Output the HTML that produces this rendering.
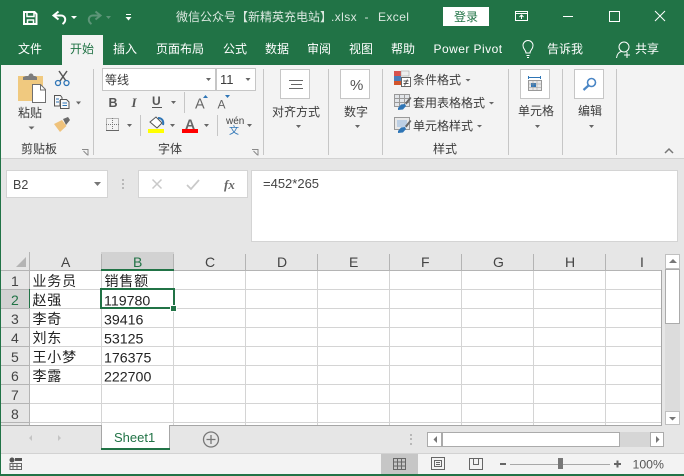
<!DOCTYPE html>
<html lang="zh">
<head>
<meta charset="utf-8">
<title>Excel</title>
<style>
html,body{margin:0;padding:0;background:#e6e6e6;width:684px;height:476px;overflow:hidden}
svg{display:block}
text{font-family:"Liberation Sans","Noto Sans CJK SC",sans-serif;font-size:12px;fill:#444}
.t{fill:#fff}
.r{fill:#3c3c3c}
.c{font-size:14.2px;fill:#222}
.z{font-size:14px;fill:#222;letter-spacing:.8px}
.h{font-size:14px;fill:#444}
.tri{fill:#666}
</style>
</head>
<body>
<svg xmlns="http://www.w3.org/2000/svg" width="684" height="476" viewBox="0 0 684 476">
<!-- backgrounds -->
<rect width="684" height="476" fill="#e6e6e6"/>
<rect width="684" height="65" fill="#217346"/>
<rect x="0" y="65" width="684" height="94" fill="#f3f3f3"/>
<rect x="0" y="158" width="684" height="1" fill="#d2d2d2"/>
<rect x="62" y="35" width="41" height="31" fill="#f3f3f3"/>

<!-- QAT -->
<g fill="none" stroke="#fff" stroke-width="2">
<path d="M24 12h10.500l2 2V24H24z"/>
</g>
<g fill="none" stroke="#fff" stroke-width="1.500">
<path d="M27 12v4.500h7V12M27.500 24v-4h6v4"/>
</g>
<path d="M58.500 11.500l-5 4 5 4" fill="none" stroke="#fff" stroke-width="2"/>
<path d="M54 15.500h7c4.500 0 6 5.500 1.500 8.500" fill="none" stroke="#fff" stroke-width="2"/>
<path d="M71 16h6l-3 3z" fill="#fff"/>
<path d="M95.500 11.500l5 4-5 4" fill="none" stroke="#5d9578" stroke-width="2"/>
<path d="M100 15.500h-7c-4.500 0-6 5.500-1.500 8.500" fill="none" stroke="#5d9578" stroke-width="2"/>
<path d="M106 16h5l-2.500 3z" fill="#5d9578"/>
<rect x="126" y="14" width="5" height="1" fill="#fff"/>
<path d="M125.500 17h6l-3 3.500z" fill="#fff"/>

<!-- title -->
<text x="176" y="21" style="fill:#dbe8e0">微信公众号【新精英充电站】</text>
<text x="331" y="21" style="fill:#dbe8e0;letter-spacing:.4px">.xlsx</text>
<text x="364.500" y="21" style="fill:#dbe8e0">-</text>
<text x="378" y="21" style="fill:#dbe8e0;letter-spacing:.4px">Excel</text>
<rect x="443" y="7" width="46" height="19" fill="#fff"/>
<text x="454" y="21" style="fill:#217346">登录</text>
<g fill="none" stroke="#fff" stroke-width="1">
<rect x="515.500" y="11.500" width="12" height="9"/>
<path d="M516 13.500h11M521.500 19v-4M519.500 17l2-2 2 2"/>
<path d="M563 16.500h10" />
<rect x="609.500" y="11.500" width="10" height="10"/>
<path d="M655 11l10 10M665 11l-10 10"/>
</g>

<!-- tabs -->
<text class="t" x="18" y="53">文件</text>
<text x="70" y="53" style="fill:#217346">开始</text>
<text class="t" x="113" y="53">插入</text>
<text class="t" x="156" y="53">页面布局</text>
<text class="t" x="223" y="53">公式</text>
<text class="t" x="265" y="53">数据</text>
<text class="t" x="307" y="53">审阅</text>
<text class="t" x="349" y="53">视图</text>
<text class="t" x="391" y="53">帮助</text>
<text class="t" x="433.500" y="53" style="letter-spacing:.45px">Power Pivot</text>
<g fill="none" stroke="#fff" stroke-width="1">
<path d="M526 53c0-3-3-3.500-3-7.500a5 5 0 0 1 10 0c0 4-3 4.500-3 7.500z"/>
<path d="M526.500 55.500h3M527 57.500h2"/>
<circle cx="624" cy="47" r="5"/>
<path d="M616.500 58c.5-4 2.500-6 5-6.500M627 52v6M624 55h6"/>
</g>
<text class="t" x="547" y="53">告诉我</text>
<text class="t" x="635" y="53">共享</text>

<!-- ribbon separators -->
<g fill="#c6c6c6">
<rect x="93" y="69" width="1" height="86"/>
<rect x="263" y="69" width="1" height="86"/>
<rect x="328" y="69" width="1" height="86"/>
<rect x="382" y="69" width="1" height="86"/>
<rect x="508" y="69" width="1" height="86"/>
<rect x="562" y="69" width="1" height="86"/>
<rect x="616" y="69" width="1" height="86"/>
<rect x="184" y="92" width="1" height="21"/>
<rect x="140" y="115" width="1" height="21"/>
<rect x="217" y="115" width="1" height="21"/>
</g>

<!-- clipboard -->
<rect x="18" y="76" width="25" height="25" fill="#f0c97f"/>
<path d="M23 80v-3l3-1h2.500a2.500 2.500 0 0 1 5 0H35l2 1v3z" fill="#7d7d7d"/>
<path d="M32.500 84.500h8l5 5v13h-13z" fill="#fff" stroke="#6f6f6f"/>
<path d="M40.500 85v5h5" fill="none" stroke="#6f6f6f"/>
<text class="r" x="18" y="117">粘贴</text>
<path d="M28.500 126.500h6l-3 3z" class="tri"/>
<path d="M59 71l7 10M67 71l-7 10" fill="none" stroke="#555" stroke-width="1.500"/>
<circle cx="58" cy="83" r="2.500" fill="none" stroke="#2e75b6" stroke-width="1.300"/>
<circle cx="66.500" cy="83" r="2.500" fill="none" stroke="#2e75b6" stroke-width="1.300"/>
<path d="M54.500 95.500h6l1.500 2v3h-2v5.500h-5.500z" fill="#f8f8f8" stroke="#555"/>
<path d="M60.500 99.500h6l2.500 2.500v6.500h-8.500z" fill="#f8f8f8" stroke="#555"/>
<path d="M56 99h3M56 102h3" stroke="#2e75b6"/>
<path d="M62.500 103h4.500M62.500 105.500h4.500" stroke="#2e75b6"/>
<path d="M76 101.500h5l-2.500 3z" class="tri"/>
<path d="M54 124l8-4 4.500 6-6.500 6z" fill="#efc27b"/>
<path d="M63 119l5-2 2 3-4 5z" fill="#6b6b6b"/>
<text class="r" x="21" y="153">剪贴板</text>
<path d="M82 149.500h6v6M83.500 151l4 4" fill="none" stroke="#8a8a8a"/>

<!-- font -->
<rect x="102.500" y="68.500" width="113" height="22" fill="#fff" stroke="#c6c6c6"/>
<rect x="216.500" y="68.500" width="39" height="22" fill="#fff" stroke="#c6c6c6"/>
<text x="105" y="84" class="r">等线</text>
<text x="220" y="84" class="r" style="font-size:13px">11</text>
<path d="M206 78h5l-2.500 3zM245.500 78h5l-2.500 3z" class="tri"/>
<text x="108.500" y="107" style="font-size:12.500px;font-weight:bold;fill:#555">B</text>
<text x="131.500" y="107" style="font-size:13px;font-style:italic;font-family:'Liberation Serif',serif;font-weight:bold;fill:#555">I</text>
<text x="152" y="105" style="font-size:12px;font-weight:bold;fill:#555">U</text>
<rect x="152" y="107" width="10" height="1" fill="#555"/>
<path d="M171 101h5l-2.500 3z" class="tri"/>
<text x="195" y="108.500" style="font-size:14.500px;fill:#666">A</text>
<path d="M203 98h5l-2.500-3z" fill="#2e75b6"/>
<text x="217.500" y="108.500" style="font-size:12px;fill:#666">A</text>
<path d="M225 95h5l-2.500 3z" fill="#2e75b6"/>
<g fill="none" stroke="#777" stroke-dasharray="1 1">
<rect x="106.500" y="118.500" width="12" height="12"/>
<path d="M112.500 118v13M106 124.500h13"/>
</g>
<path d="M106 130.500h13" stroke="#666"/>
<path d="M127 124h5l-2.500 3z" class="tri"/>
<path d="M150 122l6-5 6 6-5 5z" fill="#fff" stroke="#555"/>
<path d="M158 118c4 0 6 3 5 7" fill="none" stroke="#2e75b6" stroke-width="2"/>
<rect x="148" y="129" width="16" height="4" fill="#ffff00"/>
<path d="M170 124h5l-2.500 3z" class="tri"/>
<text x="185" y="129" style="font-size:14px;font-weight:bold;fill:#666">A</text>
<rect x="182" y="129" width="16" height="4" fill="#ff0000"/>
<path d="M204 124h5l-2.500 3z" class="tri"/>
<text x="226" y="124" style="font-size:10px;fill:#444">wén</text>
<text x="229" y="134" style="font-size:10px;fill:#2e75b6">文</text>
<path d="M247 124h5l-2.500 3z" class="tri"/>
<text class="r" x="158" y="153">字体</text>
<path d="M252 149.500h6v6M253.500 151l4 4" fill="none" stroke="#8a8a8a"/>

<!-- alignment -->
<rect x="280.500" y="69.500" width="29" height="29" fill="#fff" stroke="#c6c6c6"/>
<path d="M289 80.500h14M291 84.500h11M289 88.500h14" stroke="#666" fill="none"/>
<text class="r" x="272" y="116">对齐方式</text>
<path d="M296 125h5l-2.500 3z" class="tri"/>

<!-- number -->
<rect x="340.500" y="69.500" width="29" height="29" fill="#fff" stroke="#c6c6c6"/>
<text x="350" y="90" style="font-size:15px;fill:#555">%</text>
<text class="r" x="344" y="116">数字</text>
<path d="M355 125h5l-2.500 3z" class="tri"/>

<!-- styles -->
<rect x="394" y="71" width="7" height="5" fill="#d9534f"/>
<rect x="401" y="71" width="8" height="5" fill="#eee" stroke="#999" stroke-width=".5"/>
<rect x="394" y="76" width="7" height="5" fill="#4a7ebb"/>
<rect x="394" y="81" width="7" height="4" fill="#d2552c"/>
<rect x="401.500" y="77.500" width="9" height="9" fill="#fff" stroke="#666"/>
<path d="M403.500 81h5M403.500 83.500h5M407.500 79.500l-3 6" stroke="#555" fill="none"/>
<text class="r" x="413" y="84">条件格式</text>
<path d="M465.500 79h5l-2.500 2.500z" class="tri"/>
<g fill="#e2e5e9" stroke="#999">
<rect x="394.500" y="94.500" width="15" height="12"/>
<path d="M399.500 94.500v12M404.500 94.500v12M394.500 98.500h15M394.500 102.500h15" fill="none"/>
</g>
<path d="M398 108l3-3.500 4-.5 1 2-3 3.500-5 .5z" fill="#2e75b6"/>
<path d="M405 103l5-6 1.500 1-5 6.500z" fill="#666"/>
<text class="r" x="413" y="107">套用表格格式</text>
<path d="M489 102h5l-2.500 2.500z" class="tri"/>
<rect x="394.500" y="117.500" width="15" height="12" fill="#e8e8e8" stroke="#999"/>
<rect x="397" y="120" width="10" height="7" fill="#bccfe4"/>
<path d="M398 131l3-3.500 4-.5 1 2-3 3.500-5 .5z" fill="#2e75b6"/>
<path d="M405 126l5-6 1.500 1-5 6.500z" fill="#666"/>
<text class="r" x="413" y="130">单元格样式</text>
<path d="M477 125h5l-2.500 2.500z" class="tri"/>
<text class="r" x="433" y="153">样式</text>

<!-- cells -->
<rect x="520.500" y="69.500" width="29" height="29" fill="#fff" stroke="#c6c6c6"/>
<path d="M528 77.500h13M528.500 76v3M540.500 76v3" stroke="#2e75b6" fill="none"/>
<rect x="528.500" y="80.500" width="13" height="10" fill="#e8e8e8" stroke="#999"/>
<rect x="531" y="83" width="5" height="4" fill="#2e75b6"/>
<path d="M528.500 84h13M528.500 87.500h13M533 80.500v10M537 80.500v10" stroke="#999" stroke-width=".5" fill="none"/>
<text class="r" x="518" y="115">单元格</text>
<path d="M535 125h5l-2.500 3z" class="tri"/>

<!-- editing -->
<rect x="574.500" y="69.500" width="29" height="29" fill="#fff" stroke="#c6c6c6"/>
<circle cx="591.500" cy="82.500" r="4" fill="none" stroke="#4a86c5" stroke-width="1.600"/>
<path d="M588.500 85.500l-5 4.500" stroke="#4a86c5" stroke-width="2.200"/>
<text class="r" x="578" y="115">编辑</text>
<path d="M589 125h5l-2.500 3z" class="tri"/>
<path d="M665 153l4-4 4 4" fill="none" stroke="#777" stroke-width="1.500"/>

<!-- formula bar -->
<rect x="6.500" y="170.500" width="101" height="27" fill="#fff" stroke="#d4d4d4"/>
<text x="13" y="189" style="font-size:12.500px;fill:#444">B2</text>
<path d="M94 182h7l-3.500 4z" fill="#777"/>
<g fill="#b8b8b8"><rect x="122" y="179" width="2" height="2"/><rect x="122" y="183" width="2" height="2"/><rect x="122" y="187" width="2" height="2"/></g>
<rect x="138.500" y="170.500" width="109" height="27" fill="#fff" stroke="#d4d4d4"/>
<path d="M152.500 179.500l9 9M161.500 179.500l-9 9" stroke="#c9c9c9" stroke-width="1.500" fill="none"/>
<path d="M187 185l4 4 8-9" stroke="#c9c9c9" stroke-width="1.700" fill="none"/>
<text x="224" y="189" style="font-size:13px;font-style:italic;font-weight:bold;font-family:'Liberation Serif',serif;fill:#666">fx</text>
<rect x="251.500" y="170.500" width="426" height="71" fill="#fff" stroke="#d4d4d4"/>
<text x="263" y="188" style="font-size:13px;fill:#444">=452*265</text>

<!-- grid -->
<rect x="30" y="270" width="632" height="155" fill="#fff"/>
<rect x="1" y="252" width="661" height="18" fill="#e6e6e6"/>
<rect x="1" y="270" width="29" height="155" fill="#e6e6e6"/>
<path d="M26 257v10H16z" fill="#b4b4b4"/>
<rect x="101" y="252" width="73" height="18" fill="#d2d2d2"/>
<rect x="1" y="289" width="29" height="19" fill="#d2d2d2"/>
<g fill="#b4b4b4">
<rect x="29" y="252" width="1" height="173"/>
<rect x="1" y="270" width="661" height="1"/>
<rect x="1" y="289" width="29" height="1"/>
<rect x="1" y="308" width="29" height="1"/>
<rect x="1" y="327" width="29" height="1"/>
<rect x="1" y="346" width="29" height="1"/>
<rect x="1" y="365" width="29" height="1"/>
<rect x="1" y="384" width="29" height="1"/>
<rect x="1" y="403" width="29" height="1"/>
<rect x="1" y="422" width="29" height="1"/>
<rect x="101" y="254" width="1" height="16"/>
<rect x="173" y="254" width="1" height="16"/>
<rect x="245" y="254" width="1" height="16"/>
<rect x="317" y="254" width="1" height="16"/>
<rect x="389" y="254" width="1" height="16"/>
<rect x="461" y="254" width="1" height="16"/>
<rect x="533" y="254" width="1" height="16"/>
<rect x="605" y="254" width="1" height="16"/>
</g>
<g fill="#d4d4d4">
<rect x="30" y="289" width="631" height="1"/>
<rect x="30" y="308" width="631" height="1"/>
<rect x="30" y="327" width="631" height="1"/>
<rect x="30" y="346" width="631" height="1"/>
<rect x="30" y="365" width="631" height="1"/>
<rect x="30" y="384" width="631" height="1"/>
<rect x="30" y="403" width="631" height="1"/>
<rect x="30" y="422" width="631" height="1"/>
<rect x="101" y="271" width="1" height="154"/>
<rect x="173" y="271" width="1" height="154"/>
<rect x="245" y="271" width="1" height="154"/>
<rect x="317" y="271" width="1" height="154"/>
<rect x="389" y="271" width="1" height="154"/>
<rect x="461" y="271" width="1" height="154"/>
<rect x="533" y="271" width="1" height="154"/>
<rect x="605" y="271" width="1" height="154"/>
</g>
<rect x="661" y="270" width="1" height="155" fill="#a6a6a6"/>
<rect x="101" y="269" width="73" height="2" fill="#217346"/>
<rect x="29" y="289" width="1" height="19" fill="#217346"/>

<text class="h" x="61" y="267">A</text>
<text class="h" x="133" y="267" style="fill:#217346">B</text>
<text class="h" x="205" y="267">C</text>
<text class="h" x="277" y="267">D</text>
<text class="h" x="349" y="267">E</text>
<text class="h" x="421" y="267">F</text>
<text class="h" x="493" y="267">G</text>
<text class="h" x="565" y="267">H</text>
<text class="h" x="640" y="267">I</text>

<text class="h" x="11" y="286">1</text>
<text class="h" x="11" y="305" style="fill:#217346">2</text>
<text class="h" x="11" y="324">3</text>
<text class="h" x="11" y="343">4</text>
<text class="h" x="11" y="362">5</text>
<text class="h" x="11" y="381">6</text>
<text class="h" x="11" y="400">7</text>
<text class="h" x="11" y="419">8</text>

<text class="z" x="32.500" y="286">业务员</text>
<text class="z" x="104.500" y="286">销售额</text>
<text class="z" x="32.500" y="305">赵强</text>
<text class="c" x="104" y="305.500">119780</text>
<text class="z" x="32.500" y="324">李奇</text>
<text class="c" x="104" y="324.500">39416</text>
<text class="z" x="32.500" y="343">刘东</text>
<text class="c" x="104" y="343.500">53125</text>
<text class="z" x="32.500" y="362">王小梦</text>
<text class="c" x="104" y="362.500">176375</text>
<text class="z" x="32.500" y="381">李露</text>
<text class="c" x="104" y="381.500">222700</text>

<rect x="101" y="289" width="73" height="19" fill="none" stroke="#217346" stroke-width="2"/>
<rect x="170" y="305" width="7" height="7" fill="#fff"/>
<rect x="171" y="306" width="5" height="5" fill="#217346"/>

<!-- vertical scrollbar -->
<rect x="662" y="254" width="22" height="171" fill="#e6e6e6"/>
<rect x="665" y="268" width="15" height="157" fill="#dcdcdc"/>
<rect x="665.500" y="254.500" width="14" height="14" fill="#fff" stroke="#c0c0c0"/>
<path d="M669 263h8l-4-4z" fill="#777"/>
<rect x="665.500" y="269.500" width="14" height="54" fill="#fff" stroke="#ababab"/>
<rect x="665.500" y="411.500" width="14" height="13" fill="#fff" stroke="#c0c0c0"/>
<path d="M669 417h7l-3.500 3.500z" fill="#777"/>

<!-- sheet tabs -->
<rect x="1" y="425" width="661" height="1" fill="#a6a6a6"/>
<path d="M32 435v6l-3-3zM58 435v6l3-3z" fill="#c4c4c4"/>
<rect x="101" y="425" width="69" height="24" fill="#fff"/>
<path d="M101.500 425v24M169.500 425v24" stroke="#a6a6a6"/>
<rect x="101" y="448" width="69" height="2" fill="#217346"/>
<text x="114" y="442" style="font-size:13px;fill:#217346">Sheet1</text>
<circle cx="211" cy="439.500" r="7.500" fill="none" stroke="#777" stroke-width="1.300"/>
<path d="M206.500 439.500h9M211 435v9" stroke="#777" stroke-width="1.300"/>
<g fill="#b8b8b8"><rect x="410" y="434" width="2" height="2"/><rect x="410" y="438" width="2" height="2"/><rect x="410" y="443" width="2" height="2"/></g>
<rect x="427" y="432" width="237" height="15" fill="#d6d6d6"/>
<rect x="427.500" y="432.500" width="14" height="14" fill="#fff" stroke="#ababab"/>
<path d="M437 436v7l-3.500-3.500z" fill="#777"/>
<rect x="442.500" y="432.500" width="177" height="14" fill="#fff" stroke="#ababab"/>
<rect x="650.500" y="432.500" width="13" height="14" fill="#fff" stroke="#ababab"/>
<path d="M656 436v7l3.500-3.500z" fill="#777"/>

<!-- status bar -->
<rect x="0" y="453" width="684" height="21" fill="#f3f3f3"/>
<rect x="0" y="453" width="684" height="1" fill="#d2d2d2"/>
<rect x="0" y="474" width="684" height="2" fill="#217346"/>
<rect x="0" y="0" width="1" height="476" fill="#217346"/>
<circle cx="12" cy="460" r="2.500" fill="#555"/>
<rect x="15" y="458" width="7" height="3" fill="#555"/>
<path d="M10 463.500h11.500v6H10zM13 463v7M17 463v7M10 466.500h11" fill="none" stroke="#666"/>
<rect x="381" y="454" width="37" height="20" fill="#c6c6c6"/>
<path d="M393.500 458.500h12v11h-12zM397.500 458.500v11M401.500 458.500v11M393.500 462h12M393.500 466h12" fill="none" stroke="#666"/>
<path d="M431.500 457.500h13v12h-13z" fill="none" stroke="#666"/>
<path d="M434.500 460.500h7v6h-7zM436 462.500h4M436 464.500h4" fill="none" stroke="#666"/>
<path d="M469.500 458.500h13v11h-13zM473.500 458.500v6h5v-6" fill="none" stroke="#666"/>
<rect x="500" y="463" width="6" height="2" fill="#666"/>
<rect x="510" y="464" width="100" height="1" fill="#a8a8a8"/>
<rect x="558" y="458" width="5" height="11" fill="#777"/>
<path d="M614 464h7M617.500 460.500v7" stroke="#666" stroke-width="2"/>
<text x="632.500" y="468.500" style="font-size:12.300px;fill:#555">100%</text>
</svg>
</body>
</html>
